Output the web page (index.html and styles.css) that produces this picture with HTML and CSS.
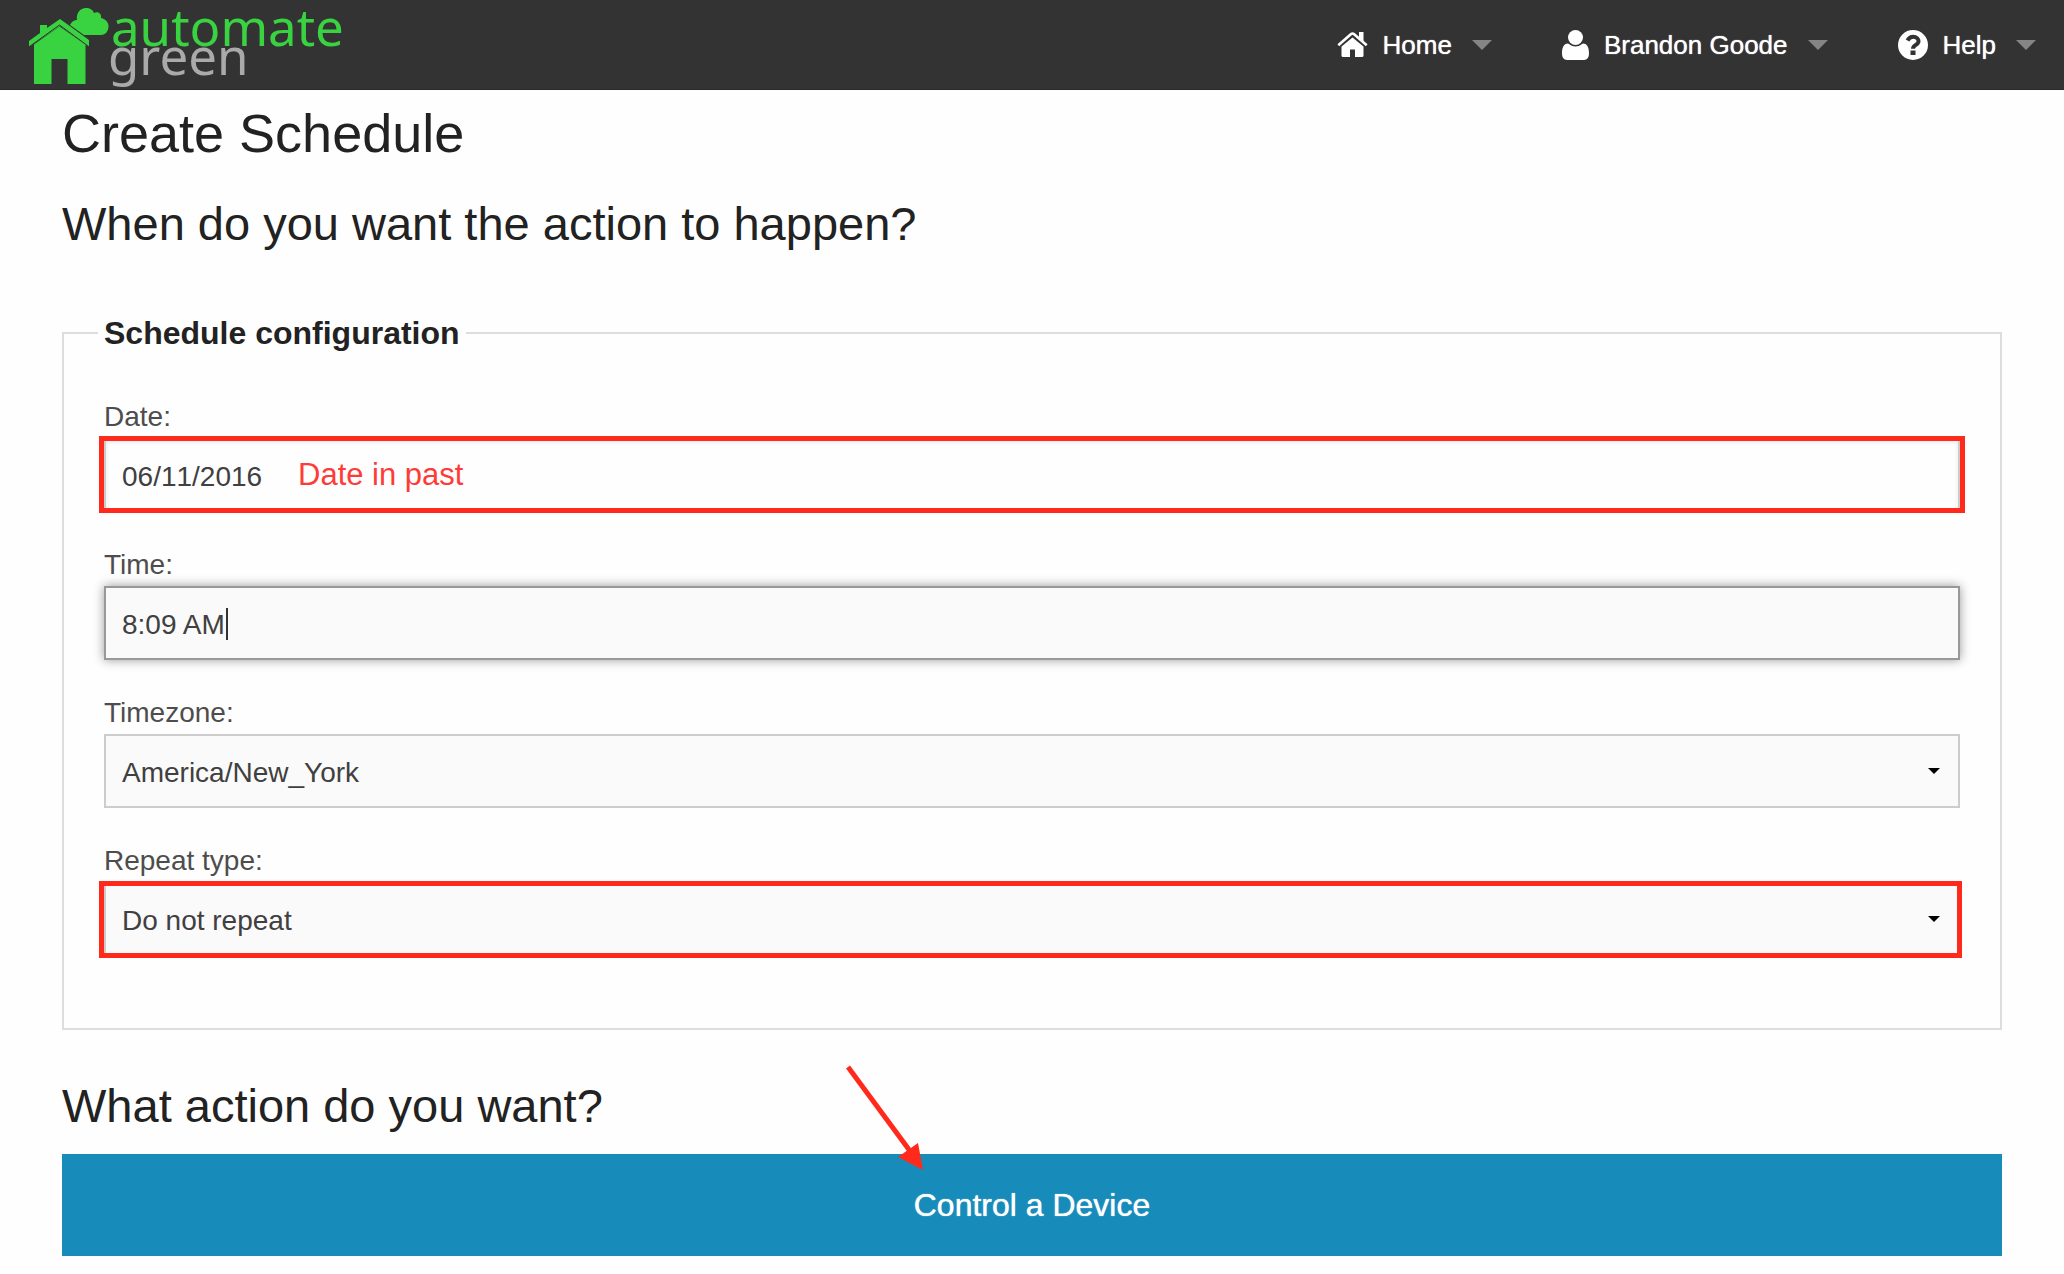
FILE: index.html
```html
<!DOCTYPE html>
<html lang="en">
<head>
<meta charset="utf-8">
<meta name="viewport" content="width=device-width, initial-scale=1">
<title>Create Schedule - Automate Green</title>
<link rel="stylesheet" href="styles.css">
</head>
<body>
<header class="topbar">
  <a class="brand" href="#">
    <svg class="brand-mark" viewBox="0 0 82 80" aria-hidden="true">
      <path d="M1 35 12 27V19h7v3l13-9 29 21v7L32 20 1 41z"/>
      <path d="M6 38.500 31.500 20.500 57.500 38.500V78H39.500V53H23.500V78H6z"/>
      <path class="gap" d="M0 41.500 31.500 19 62 41.500"/>
      <path d="M42 19C44 15 47 14 49 14C48 7 52 2 58 2C62 2 65 4 66 7C70 5 74 8 73 12C78 13 81 17 80.500 21C80 26 77 29 73 29H56z"/>
    </svg>
    <span class="brand-name"><span class="brand-top">automate</span><span class="brand-bottom">green</span></span>
  </a>
  <nav class="menu">
    <a class="menu-item" href="#">
      <svg class="icon-home" viewBox="0 0 31 26" aria-hidden="true"><path d="M4.500 14.500 15.500 5.500 26.500 14.500V23.500Q26.500 25 25 25H18V17.500H13V25H6Q4.500 25 4.500 23.500z"/><path d="M1.300 13.200 13.800 2.200Q15.500 .8 17.200 2.200L29.700 13.200" fill="none" stroke="#333" stroke-width="5"/><path d="M1.300 13.200 13.800 2.200Q15.500 .8 17.200 2.200L29.700 13.200" fill="none" stroke="currentColor" stroke-width="2.600"/><path d="M22 0H26.500V10L22 6z"/></svg>
      <span>Home</span><i class="caret"></i>
    </a>
    <a class="menu-item" href="#">
      <svg class="icon-user" viewBox="0 0 27 30" aria-hidden="true"><circle cx="13.500" cy="7.500" r="7.500"/><path d="M6 13.500Q13.500 19.500 21 13.500C25.500 13.500 27 18 27 23.500Q27 30 22 30H5Q0 30 0 23.500C0 18 1.500 13.500 6 13.500z"/></svg>
      <span>Brandon Goode</span><i class="caret"></i>
    </a>
    <a class="menu-item" href="#">
      <svg class="icon-help" viewBox="0 0 30 30" aria-hidden="true"><circle cx="15" cy="15" r="15"/><path d="M9.500 10.500C11 7.500 12.500 6.700 15.200 6.700C18.500 6.700 20.500 9 20.500 11.200C20.500 15 15 14.800 15 18.700" fill="none" stroke="#333" stroke-width="4"/><path fill="#333" d="M12.500 20.500h5v4.500h-5z"/></svg>
      <span>Help</span><i class="caret"></i>
    </a>
  </nav>
</header>
<main class="page">
  <h1>Create Schedule</h1>
  <h2>When do you want the action to happen?</h2>
  <form class="schedule">
    <fieldset>
      <legend>Schedule configuration</legend>
      <div class="field">
        <label for="date">Date:</label>
        <div class="control marked">
          <input class="box plain" id="date" type="text" value="06/11/2016">
          <span class="note">Date in past</span>
        </div>
      </div>
      <div class="field">
        <label for="time">Time:</label>
        <div class="control editing">
          <input class="box focused" id="time" type="text" value="8:09 AM">
        </div>
      </div>
      <div class="field">
        <label for="timezone">Timezone:</label>
        <div class="control dropdown">
          <select class="box" id="timezone"><option>America/New_York</option></select>
        </div>
      </div>
      <div class="field">
        <label for="repeat">Repeat type:</label>
        <div class="control dropdown marked">
          <select class="box" id="repeat"><option>Do not repeat</option></select>
        </div>
      </div>
    </fieldset>
    <h2>What action do you want?</h2>
    <div class="action">
      <button type="button">Control a Device</button>
      <svg class="arrow" viewBox="0 0 80 106" aria-hidden="true"><path d="M2 2 64 86" stroke="currentColor" stroke-width="5"/><path d="M77 105 52 92 72 78z"/></svg>
    </div>
  </form>
</main>
</body>
</html>
```
FILE: styles.css
```css
* { box-sizing: border-box; }

body {
  margin: 0;
  background: #fefefe;
  color: #222;
  font-family: "Liberation Sans", Arial, sans-serif;
}

svg { fill: currentColor; }

.topbar {
  display: flex;
  justify-content: space-between;
  align-items: center;
  height: 90px;
  padding: 0 28px;
  background: #333;
  border-bottom: 1px solid #2c282b;
}

.brand {
  display: flex;
  align-items: flex-start;
  height: 78px;
  color: #39d341;
  text-decoration: none;
}

.brand-mark { width: 82px; height: 80px; }
.brand-mark .gap { fill: none; stroke: #333; stroke-width: 1; }

.brand-name {
  display: flex;
  flex-direction: column;
  padding-top: 6px;
  font-family: "Noto Sans", sans-serif;
  font-size: 51px;
  font-weight: 400;
  line-height: 29px;
}

.brand-top { margin-left: 1px; }
.brand-bottom { margin-left: -2px; color: #aaa; }

.menu { display: flex; gap: 70px; }

.menu-item {
  display: flex;
  align-items: center;
  color: #fff;
  font-size: 26px;
  line-height: 30px;
  text-decoration: none;
  text-shadow: 0 0 1px #fff;
}

.menu-item svg { margin-right: 15px; }
.icon-home { width: 31px; height: 26px; }
.icon-user { width: 27px; height: 30px; }
.icon-help { width: 30px; height: 30px; }

.caret {
  margin-left: 20px;
  border: 10px solid transparent;
  border-top-color: #858585;
  border-bottom: 0;
}

.page { padding: 5px 62px 18px; }

h1, h2 { margin: 0; font-weight: 400; }
h1 { margin-bottom: 20px; font-size: 54px; line-height: 76px; }
h2 { font-size: 47px; line-height: 66px; }

fieldset {
  margin: 58px 0 43px;
  padding: 45px 40px 40px;
  border: 2px solid #ddd;
}

legend {
  margin-left: -6px;
  padding: 0 6px;
  font-size: 32px;
  font-weight: 700;
  line-height: 36px;
}

.field { margin-bottom: 32px; }

.field label {
  display: block;
  color: #4d4d4d;
  font-size: 28px;
  line-height: 42px;
}

.control { position: relative; }

.box {
  display: block;
  width: 100%;
  height: 74px;
  padding: 2px 16px 0;
  appearance: none;
  border: 2px solid #ccc;
  border-radius: 0;
  outline: 0;
  background: #fafafa;
  color: #404040;
  font: 28px "Liberation Sans", Arial, sans-serif;
}

input.box { padding-top: 4px; }

.plain {
  background: #fefefe;
  box-shadow: inset 0 2px 4px rgba(0, 0, 0, .1);
  font-kerning: none;
}

.focused {
  border-color: #999;
  box-shadow: 0 0 10px #999;
}

/* text cursor of the field being edited */
.editing::after {
  content: "";
  position: absolute;
  top: 22px;
  left: 122px;
  width: 2px;
  height: 32px;
  background: #333;
}

.dropdown::after {
  content: "";
  position: absolute;
  top: 34px;
  right: 20px;
  border: 6px solid transparent;
  border-top-color: #000;
  border-bottom: 0;
  pointer-events: none;
}

.marked::before {
  content: "";
  position: absolute;
  inset: -2px -5px -1px;
  border: 5px solid #ff2a1c;
  pointer-events: none;
}

.dropdown.marked::before { inset: -1px -2px -2px -5px; }

.note {
  position: absolute;
  top: 20px;
  left: 194px;
  color: #ff3b37;
  font-size: 31px;
  line-height: 34px;
}

.action { position: relative; margin-top: 15px; }

.action button {
  display: block;
  width: 100%;
  padding: 32px;
  border: 0;
  background: #178cbb;
  color: #fff;
  font: 32px/38px "Liberation Sans", Arial, sans-serif;
  text-shadow: 0 0 1px #fff;
}

.arrow {
  position: absolute;
  top: -89px;
  left: 50%;
  width: 80px;
  height: 106px;
  margin-left: -186px;
  color: #ff2a1c;
  pointer-events: none;
}
```
